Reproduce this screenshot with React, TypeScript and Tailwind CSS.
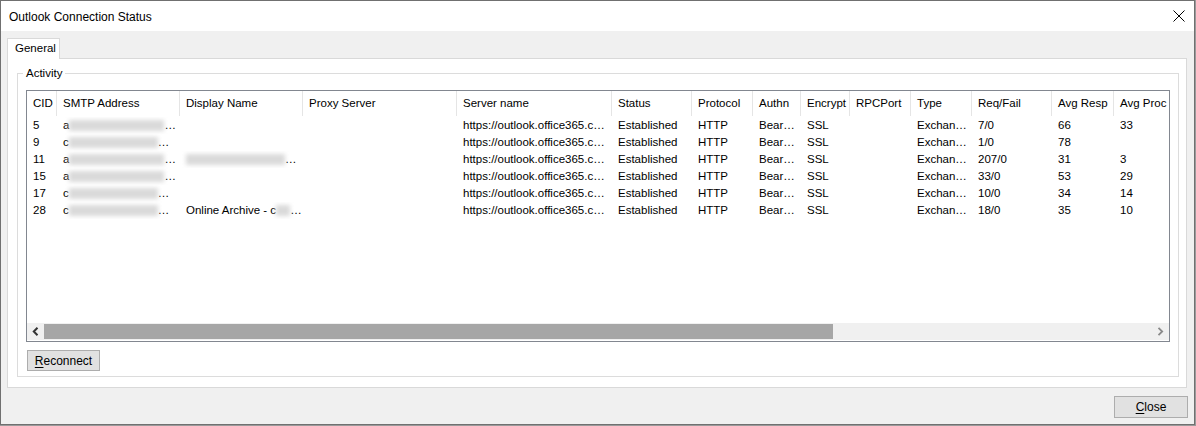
import React from "react";

const cols: { label: string; w: number }[] = [
  { label: "CID", w: 30 },
  { label: "SMTP Address", w: 123 },
  { label: "Display Name", w: 123 },
  { label: "Proxy Server", w: 154 },
  { label: "Server name", w: 155 },
  { label: "Status", w: 80 },
  { label: "Protocol", w: 61 },
  { label: "Authn", w: 48 },
  { label: "Encrypt", w: 49 },
  { label: "RPCPort", w: 61 },
  { label: "Type", w: 61 },
  { label: "Req/Fail", w: 80 },
  { label: "Avg Resp", w: 62 },
  { label: "Avg Proc", w: 62 },
];

type Row = {
  cid: string;
  first: string;
  blurW: number;
  disp: "none" | "blur" | "archive";
  req: string;
  resp: string;
  proc: string;
};

const rows: Row[] = [
  { cid: "5", first: "a", blurW: 95, disp: "none", req: "7/0", resp: "66", proc: "33" },
  { cid: "9", first: "c", blurW: 89, disp: "none", req: "1/0", resp: "78", proc: "" },
  { cid: "11", first: "a", blurW: 95, disp: "blur", req: "207/0", resp: "31", proc: "3" },
  { cid: "15", first: "a", blurW: 95, disp: "none", req: "33/0", resp: "53", proc: "29" },
  { cid: "17", first: "c", blurW: 89, disp: "none", req: "10/0", resp: "34", proc: "14" },
  { cid: "28", first: "c", blurW: 89, disp: "archive", req: "18/0", resp: "35", proc: "10" },
];

function Blur({ w }: { w: number }) {
  return (
    <span
      className="inline-block h-[11px] bg-[#dadada] blur-[2px] align-middle"
      style={{ width: w }}
    />
  );
}

function Cell({ w, children }: { w: number; children?: React.ReactNode }) {
  return (
    <div
      className="shrink-0 pl-[6px] whitespace-nowrap overflow-hidden flex items-center"
      style={{ width: w }}
    >
      {children}
    </div>
  );
}

export default function App() {
  return (
    <div className="w-[1196px] h-[426px] bg-[#9a9a9a] overflow-hidden font-['Liberation_Sans',Arial,sans-serif] text-[12px] text-black">
      <div className="w-[1195px] h-[425px] border border-[#707070] bg-[#f0f0f0] flex flex-col">
        {/* Title bar */}
        <div className="h-[30px] bg-white flex items-center justify-between pl-[8px] pr-[8px] shrink-0">
          <span className="text-[12px] mt-[2px]">Outlook Connection Status</span>
          <svg width="12" height="12" viewBox="0 0 12 12" className="mr-[1px]">
            <path d="M0.5 0.5 L11.5 11.5 M11.5 0.5 L0.5 11.5" stroke="#000" strokeWidth="1" />
          </svg>
        </div>

        {/* Body */}
        <div className="flex-1 flex flex-col px-[6px] pt-[7px]">
          {/* Tab header */}
          <div className="flex">
            <div className="relative z-10 w-[53px] h-[21px] -mb-[1px] bg-white border-t border-l border-r border-[#d9d9d9] flex items-center pl-[7px] text-[11.5px]">
              General
            </div>
          </div>
          {/* Tab panel */}
          <div className="w-[1180px] h-[330px] bg-white border border-[#d9d9d9] pt-[14px] pl-[9px] text-[11.5px]">
            {/* Group box */}
            <div className="relative w-[1162px] h-[304px] border border-[#dcdcdc] pt-[16px] pl-[8px]">
              <span className="absolute left-[5px] -top-[8px] bg-white px-[3px] leading-[15px]">Activity</span>

              {/* List view */}
              <div className="w-[1144px] h-[252px] border border-[#828790] flex flex-col overflow-hidden">
                <div className="flex-1 overflow-hidden">
                  <div className="flex h-[25px] mb-[1px]">
                    {cols.map((c, i) => (
                      <div
                        key={c.label}
                        className={`shrink-0 pl-[6px] whitespace-nowrap overflow-hidden flex items-center pt-[1px] ${
                          i < cols.length - 1 ? "border-r border-[#e5e5e5]" : ""
                        }`}
                        style={{ width: c.w }}
                      >
                        {c.label}
                      </div>
                    ))}
                  </div>
                  {rows.map((r) => (
                    <div key={r.cid} className="flex h-[17px]">
                      <Cell w={30}>{r.cid}</Cell>
                      <Cell w={123}>
                        <span>{r.first}</span>
                        <Blur w={r.blurW} />
                        <span>…</span>
                      </Cell>
                      <Cell w={123}>
                        {r.disp === "blur" && (
                          <>
                            <Blur w={99} />
                            <span>…</span>
                          </>
                        )}
                        {r.disp === "archive" && (
                          <>
                            <span>Online Archive - c</span>
                            <Blur w={14} />
                            <span>…</span>
                          </>
                        )}
                      </Cell>
                      <Cell w={154} />
                      <Cell w={155}>https://outlook.office365.c…</Cell>
                      <Cell w={80}>Established</Cell>
                      <Cell w={61}>HTTP</Cell>
                      <Cell w={48}>Bear…</Cell>
                      <Cell w={49}>SSL</Cell>
                      <Cell w={61} />
                      <Cell w={61}>Exchan…</Cell>
                      <Cell w={80}>{r.req}</Cell>
                      <Cell w={62}>{r.resp}</Cell>
                      <Cell w={62}>{r.proc}</Cell>
                    </div>
                  ))}
                </div>
                {/* Horizontal scrollbar */}
                <div className="h-[17px] bg-[#f0f0f0] flex items-stretch shrink-0 mb-[1px]">
                  <div className="w-[17px] flex items-center justify-center">
                    <svg width="7" height="9" viewBox="0 0 7 9">
                      <path d="M5.5 0.8 L1.8 4.5 L5.5 8.2" fill="none" stroke="#333" strokeWidth="2" />
                    </svg>
                  </div>
                  <div className="flex-1 flex items-center">
                    <div className="w-[789px] h-[15px] bg-[#a6a6a6]" />
                  </div>
                  <div className="w-[17px] flex items-center justify-center">
                    <svg width="7" height="9" viewBox="0 0 7 9">
                      <path d="M1.5 0.8 L5.2 4.5 L1.5 8.2" fill="none" stroke="#8a8a8a" strokeWidth="1.8" />
                    </svg>
                  </div>
                </div>
              </div>

              <div className="mt-[8px] ml-[1px] w-[73px] h-[21px] bg-[#e1e1e1] border border-[#adadad] flex items-center justify-center text-[12px]">
                <span>
                  <span className="underline underline-offset-2">R</span>econnect
                </span>
              </div>
            </div>
          </div>

          {/* Footer */}
          <div className="flex justify-end pt-[8px] pr-[0px]">
            <div className="w-[74px] h-[22px] bg-[#e1e1e1] border border-[#adadad] flex items-center justify-center">
              <span>
                <span className="underline underline-offset-2">C</span>lose
              </span>
            </div>
          </div>
        </div>
      </div>
    </div>
  );
}
